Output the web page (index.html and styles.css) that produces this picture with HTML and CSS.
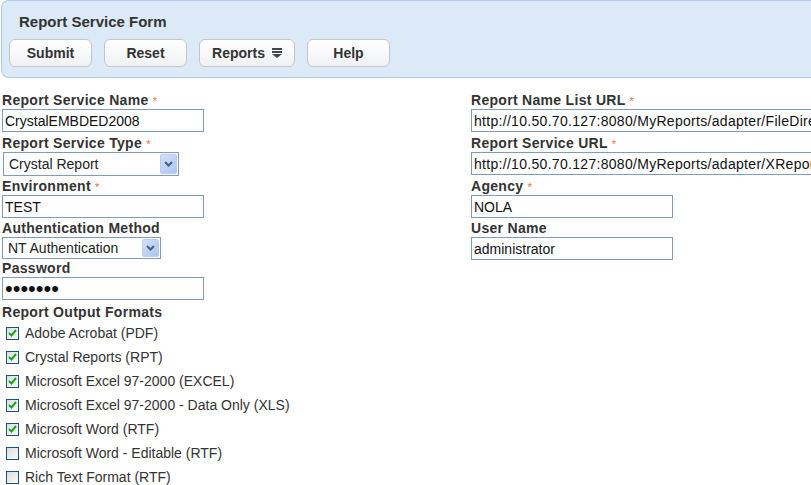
FILE: index.html
```html
<!DOCTYPE html>
<html lang="en">
<head>
  <meta charset="UTF-8" />
  <title>Report Service Form</title>
  <link rel="stylesheet" href="styles.css">
</head>
<body>
  <div class="page">
    <div class="toolbar">
      <h1 class="toolbar-title">Report Service Form</h1>
      <div class="toolbar-buttons">
        <button type="button" class="btn">Submit</button>
        <button type="button" class="btn">Reset</button>
        <button type="button" class="btn btn-menu">Reports
          <svg class="menu-icon" width="10" height="10" viewBox="0 0 10 10">
            <rect x="0" y="0" width="10" height="2" />
            <rect x="0" y="3" width="10" height="2" />
            <polygon points="0,6 10,6 5,10" />
          </svg>
        </button>
        <button type="button" class="btn">Help</button>
      </div>
    </div>

    <form class="form">
      <div class="form-grid">
        <div class="field">
          <label class="field-label">Report Service Name <span class="req">*</span></label>
          <input type="text" class="text-input" value="CrystalEMBDED2008" />
        </div>
        <div class="field">
          <label class="field-label">Report Name List URL <span class="req">*</span></label>
          <input type="text" class="text-input wide" value="http://10.50.70.127:8080/MyReports/adapter/FileDirectoryList" />
        </div>

        <div class="field">
          <label class="field-label">Report Service Type <span class="req">*</span></label>
          <div class="select select-type">
            <span class="select-text">Crystal Report</span>
            <span class="select-arrow">
              <svg width="9" height="6" viewBox="0 0 9 6"><polyline points="1,1 4.5,4.5 8,1" /></svg>
            </span>
          </div>
        </div>
        <div class="field">
          <label class="field-label">Report Service URL <span class="req">*</span></label>
          <input type="text" class="text-input wide" value="http://10.50.70.127:8080/MyReports/adapter/XReportService" />
        </div>

        <div class="field">
          <label class="field-label">Environment <span class="req">*</span></label>
          <input type="text" class="text-input" value="TEST" />
        </div>
        <div class="field">
          <label class="field-label">Agency <span class="req">*</span></label>
          <input type="text" class="text-input" value="NOLA" />
        </div>

        <div class="field">
          <label class="field-label">Authentication Method</label>
          <div class="select select-auth">
            <span class="select-text">NT Authentication</span>
            <span class="select-arrow">
              <svg width="9" height="6" viewBox="0 0 9 6"><polyline points="1,1 4.5,4.5 8,1" /></svg>
            </span>
          </div>
        </div>
        <div class="field">
          <label class="field-label">User Name</label>
          <input type="text" class="text-input" value="administrator" />
        </div>

        <div class="field">
          <label class="field-label">Password</label>
          <input type="password" class="text-input password" value="secret1" />
        </div>
      </div>

      <div class="formats">
        <label class="field-label">Report Output Formats</label>
        <ul class="format-list">
          <li><span class="check checked"><svg width="9" height="8" viewBox="0 0 9 8"><polyline points="1,4 3.5,6.5 8,1" /></svg></span>Adobe Acrobat (PDF)</li>
          <li><span class="check checked"><svg width="9" height="8" viewBox="0 0 9 8"><polyline points="1,4 3.5,6.5 8,1" /></svg></span>Crystal Reports (RPT)</li>
          <li><span class="check checked"><svg width="9" height="8" viewBox="0 0 9 8"><polyline points="1,4 3.5,6.5 8,1" /></svg></span>Microsoft Excel 97-2000 (EXCEL)</li>
          <li><span class="check checked"><svg width="9" height="8" viewBox="0 0 9 8"><polyline points="1,4 3.5,6.5 8,1" /></svg></span>Microsoft Excel 97-2000 - Data Only (XLS)</li>
          <li><span class="check checked"><svg width="9" height="8" viewBox="0 0 9 8"><polyline points="1,4 3.5,6.5 8,1" /></svg></span>Microsoft Word (RTF)</li>
          <li><span class="check"></span>Microsoft Word - Editable (RTF)</li>
          <li><span class="check"></span>Rich Text Format (RTF)</li>
        </ul>
      </div>
    </form>
  </div>
</body>
</html>
```

FILE: styles.css
```css
:root {
  --text-color: #333;
  --input-border: #7f9db9;
  --panel-bg: #dce9f6;
  --panel-border: #b3cae6;
  --required: #f26a3c;
}

* {
  box-sizing: border-box;
}

body {
  margin: 0;
  font-family: "Liberation Sans", Arial, sans-serif;
  font-size: 14px;
  color: var(--text-color);
  background: #fff;
  overflow: hidden;
}

.page {
  width: 900px;
}

/* Toolbar panel */
.toolbar {
  height: 78px;
  margin-left: 1px;
  padding: 12px 0 0 7px;
  background: var(--panel-bg);
  border: 1px solid var(--panel-border);
  border-right: none;
  border-radius: 8px 0 0 8px;
}

.toolbar-title {
  margin: 0 0 9px 10px;
  font-size: 15px;
  line-height: 17px;
  font-weight: bold;
  color: #333;
}

.toolbar-buttons {
  display: flex;
  gap: 12px;
}

.btn {
  display: inline-flex;
  align-items: center;
  justify-content: center;
  gap: 7px;
  width: 83px;
  height: 28px;
  padding: 0;
  border: 1px solid #c6c6c6;
  border-radius: 6px;
  background: linear-gradient(#ffffff, #eff1f3);
  font: bold 14px "Liberation Sans", Arial, sans-serif;
  color: #333;
}

.btn-menu {
  width: 96px;
}

.menu-icon {
  fill: #444;
}

/* Form */
.form {
  margin-top: 13px;
  padding-left: 2px;
}

.form-grid {
  display: grid;
  grid-template-columns: 469px 1fr;
  grid-template-rows: 43px 43px 42px 40px 44px;
}

.field-label {
  display: block;
  height: 18px;
  font-weight: bold;
  line-height: 18px;
  letter-spacing: 0.3px;
  color: #333;
}

.req {
  color: var(--required);
  font-size: 11px;
  line-height: 0;
  font-weight: normal;
}

.text-input {
  display: block;
  width: 202px;
  height: 23px;
  padding: 0 2px;
  border: 1px solid var(--input-border);
  font: 14px "Liberation Sans", Arial, sans-serif;
  color: #111;
  background: #fff;
}

.text-input.wide {
  width: 420px;
  letter-spacing: 0.3px;
}

.text-input.password {
  font-size: 22px;
  padding-top: 1px;
}

/* Fake dropdowns */
.select {
  display: flex;
  align-items: center;
  justify-content: space-between;
  height: 24px;
  padding: 1px;
  border: 1px solid var(--input-border);
  background: #fff;
}

.select-type {
  width: 176px;
  margin-left: 1px;
}

.select-auth {
  width: 159px;
  height: 22px;
}

.select-text {
  padding-left: 4px;
  color: #222;
}

.select-arrow {
  display: flex;
  align-items: center;
  justify-content: center;
  width: 17px;
  height: 100%;
  border: 1px solid #b9cdf0;
  border-radius: 2px;
  background: linear-gradient(135deg, #d2e0f9, #adc5f1);
}

.select-arrow polyline {
  fill: none;
  stroke: #4a5e84;
  stroke-width: 2;
}

/* Output formats */
.format-list {
  list-style: none;
  margin: 0;
  padding: 0 0 0 4px;
}

.format-list li {
  display: flex;
  align-items: center;
  gap: 6px;
  height: 24px;
  line-height: 24px;
  color: #333;
}

.check {
  display: inline-flex;
  align-items: center;
  justify-content: center;
  width: 13px;
  height: 13px;
  border: 1px solid #1c5180;
  background: linear-gradient(135deg, #dcdcd7, #fbfbf9);
}

.check polyline {
  fill: none;
  stroke: #21a121;
  stroke-width: 2;
}
```
